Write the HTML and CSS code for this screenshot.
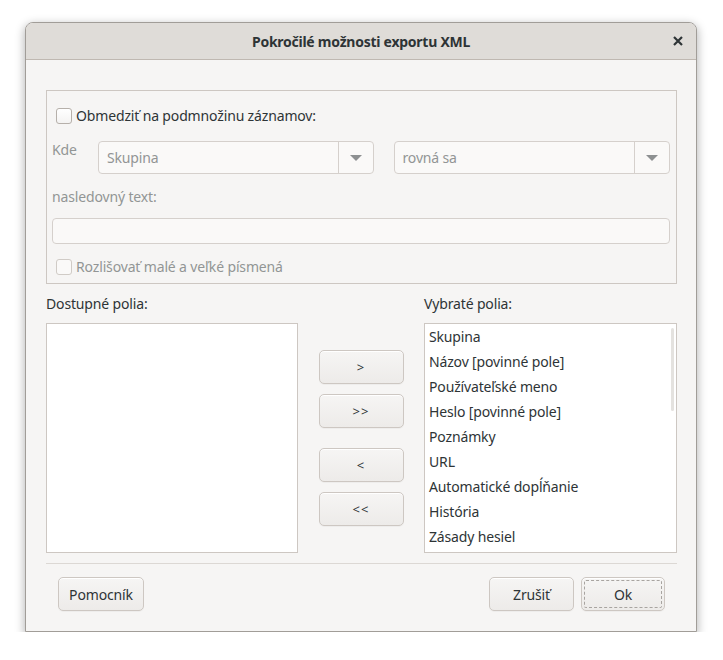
FILE: index.html
```html
<!DOCTYPE html>
<html lang="sk">
<head>
<meta charset="utf-8">
<title>Pokročilé možnosti exportu XML</title>
<link rel="stylesheet" href="styles.css">
</head>
<body>
<div class="window">
  <div class="titlebar">
    <span class="title">Pokročilé možnosti exportu XML</span>
    <span class="close">
      <svg width="10" height="10" viewBox="0 0 10 10"><path d="M1 1 L9 9 M9 1 L1 9" stroke="#2e3436" stroke-width="2.2" stroke-linecap="butt"/></svg>
    </span>
  </div>
  <div class="content">
    <div class="frame">
      <div class="check-row">
        <span class="checkbox"></span>
        <span class="check-label">Obmedziť na podmnožinu záznamov:</span>
      </div>
      <div class="where-row">
        <span class="dim-label kde">Kde</span>
        <div class="combo combo-field">
          <span class="combo-text">Skupina</span>
          <span class="combo-arrow"><span class="tri"></span></span>
        </div>
        <div class="combo combo-op">
          <span class="combo-text">rovná sa</span>
          <span class="combo-arrow"><span class="tri"></span></span>
        </div>
      </div>
      <div class="dim-label text-label">nasledovný text:</div>
      <div class="entry"></div>
      <div class="check-row check-case">
        <span class="checkbox disabled"></span>
        <span class="check-label dim">Rozlišovať malé a veľké písmená</span>
      </div>
    </div>

    <div class="fields">
      <div class="field-label">Dostupné polia:</div>
      <div></div>
      <div class="field-label">Vybraté polia:</div>
      <div class="list"></div>
      <div class="move-buttons">
        <button class="btn move">&gt;</button>
        <button class="btn move">&gt;&gt;</button>
        <button class="btn move spaced">&lt;</button>
        <button class="btn move">&lt;&lt;</button>
      </div>
      <div class="list selected-list">
        <div class="item">Skupina</div>
        <div class="item">Názov [povinné pole]</div>
        <div class="item">Používateľské meno</div>
        <div class="item">Heslo [povinné pole]</div>
        <div class="item">Poznámky</div>
        <div class="item">URL</div>
        <div class="item">Automatické dopĺňanie</div>
        <div class="item">História</div>
        <div class="item">Zásady hesiel</div>
        <span class="scroll-indicator"></span>
      </div>
    </div>

    <div class="separator"></div>

    <div class="actions">
      <button class="btn action help">Pomocník</button>
      <span class="spacer"></span>
      <button class="btn action cancel">Zrušiť</button>
      <button class="btn action ok">Ok</button>
    </div>
  </div>
</div>
</body>
</html>
```

FILE: styles.css
```css
* { box-sizing: border-box; }

html, body {
  margin: 0;
  padding: 0;
  background: #ffffff;
}

body {
  font-family: "Noto Sans", "Open Sans", sans-serif;
  font-size: 14px;
  letter-spacing: -0.15px;
  color: #2e3436;
  padding: 22px 0 0 25px;
}

.window {
  width: 672px;
  height: 610px;
  border: 1px solid #a19d98;
  border-radius: 8px 8px 0 0;
  background: #f6f5f4;
  box-shadow: 0 3px 10px 1px rgba(0, 0, 0, 0.28);
  display: flex;
  flex-direction: column;
  overflow: hidden;
}

.titlebar {
  height: 37px;
  flex: none;
  background: #dfdcd8;
  border-bottom: 1px solid #bfb8b1;
  display: flex;
  align-items: center;
  justify-content: center;
  position: relative;
}

.title {
  font-weight: bold;
  font-size: 14px;
  color: #2e3436;
  letter-spacing: -0.25px;
}

.close {
  position: absolute;
  right: 13px;
  top: 13px;
  width: 10px;
  height: 10px;
  display: flex;
}

.content {
  flex: 1;
  padding: 30px 19px 0 20px;
  display: flex;
  flex-direction: column;
}

.frame {
  border: 1px solid #cdc7c2;
  height: 194px;
  padding: 17px 6px 0 5px;
  display: flex;
  flex-direction: column;
}

.check-row {
  display: flex;
  align-items: center;
  height: 16px;
  margin-left: 4px;
}

.checkbox {
  width: 16px;
  height: 16px;
  border: 1px solid #b6b0aa;
  border-radius: 3px;
  background: linear-gradient(#ffffff, #f4f3f2);
  flex: none;
}

.checkbox.disabled {
  border-color: #d0cbc6;
  background: #faf9f8;
}

.check-label {
  margin-left: 4px;
  line-height: 16px;
  white-space: nowrap;
}

.check-label.dim {
  color: #929595;
}

.dim-label {
  color: #929595;
  line-height: 16px;
}

.where-row {
  display: flex;
  margin-top: 17px;
  height: 33px;
}

.kde {
  width: 46px;
  flex: none;
  padding-top: 1px;
}

.combo {
  height: 33px;
  border: 1px solid #d5d0cc;
  border-radius: 4px;
  background: #faf9f8;
  display: flex;
  align-items: center;
}

.combo-field { width: 276px; }
.combo-op { width: 277px; margin-left: 20px; }

.combo-text {
  flex: 1;
  color: #929595;
  padding-left: 8px;
  line-height: 18px;
}

.combo-arrow {
  width: 35px;
  height: 100%;
  border-left: 1px solid #d5d0cc;
  display: flex;
  align-items: center;
  justify-content: center;
}

.tri {
  width: 0;
  height: 0;
  border-left: 6px solid transparent;
  border-right: 6px solid transparent;
  border-top: 6px solid #8d9091;
}

.text-label {
  margin-top: 14px;
  line-height: 18px;
}

.entry {
  margin-top: 12px;
  height: 26px;
  border: 1px solid #d5d0cc;
  border-radius: 4px;
  background: #faf9f8;
}

.check-case {
  margin-top: 15px;
}

.fields {
  display: grid;
  grid-template-columns: 252px 126px 253px;
  grid-template-rows: 18px 230px;
  row-gap: 10px;
  margin-top: 11px;
}

.field-label {
  line-height: 18px;
}

.list {
  background: #ffffff;
  border: 1px solid #cdc7c2;
  position: relative;
}

.item {
  height: 25px;
  line-height: 25px;
  padding-left: 4px;
  white-space: nowrap;
}

.scroll-indicator {
  position: absolute;
  right: 2px;
  top: 4px;
  width: 3px;
  height: 83px;
  border-radius: 2px;
  background: #e4e2df;
}

.move-buttons {
  display: flex;
  flex-direction: column;
  align-items: center;
  justify-content: center;
  gap: 10px;
}

.btn {
  font-family: inherit;
  font-size: 14px;
  letter-spacing: -0.15px;
  color: #2e3436;
  height: 34px;
  border: 1px solid #cdc7c2;
  border-radius: 5px;
  background: linear-gradient(#f6f5f4, #edebe9);
  box-shadow: inset 0 1px #ffffff, 0 1px rgba(0, 0, 0, 0.03);
  padding: 0;
  display: flex;
  align-items: center;
  justify-content: center;
}

.move {
  width: 85px;
  font-size: 13px;
  letter-spacing: 1px;
}

.move.spaced {
  margin-top: 10px;
}

.separator {
  margin-top: 10px;
  height: 1px;
  background: #dcd8d4;
}

.actions {
  display: flex;
  align-items: center;
  margin-top: 13px;
  padding: 0 12px;
  gap: 7px;
}

.spacer { flex: 1; }

.help { width: 86px; }
.cancel { width: 85px; }
.ok {
  width: 84px;
  outline: 1px dashed #a8a4a0;
  outline-offset: -4px;
}
```
